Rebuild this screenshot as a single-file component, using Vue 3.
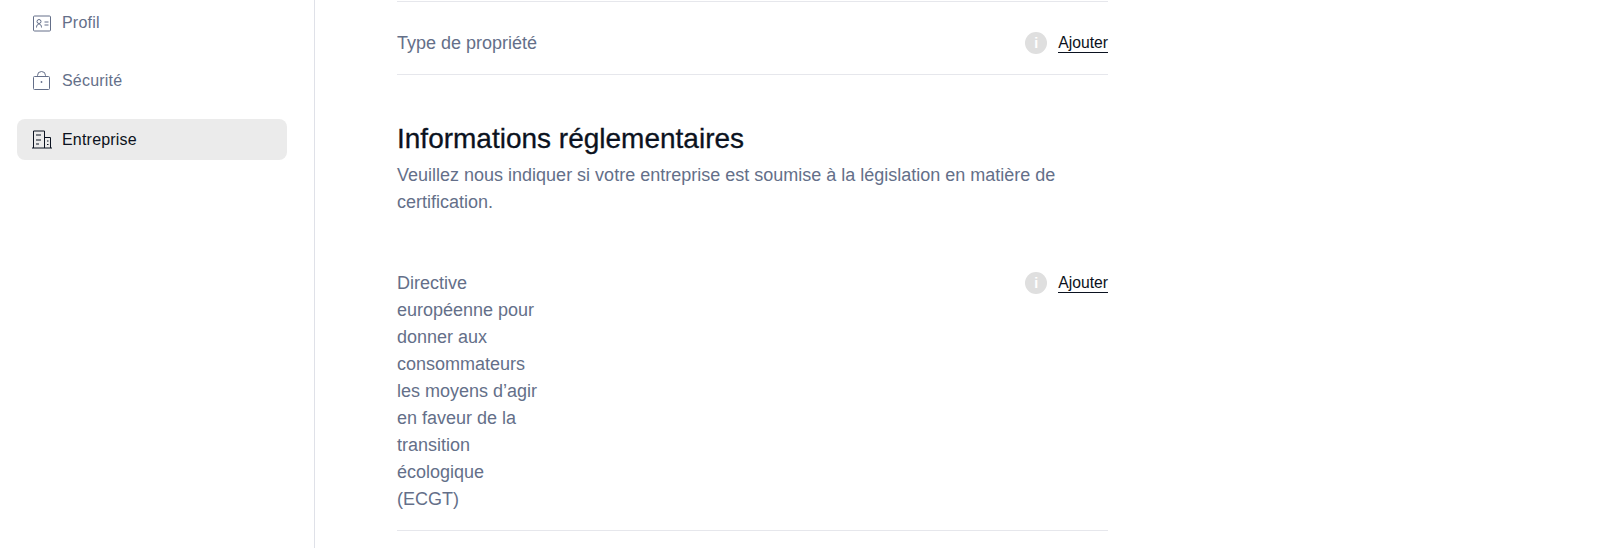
<template>
  <div class="page">
    <aside class="sidebar">
      <nav class="menu">
        <a v-for="item in menu" :key="item.label" class="item" :class="{ active: item.active }">
          <svg v-if="item.icon === 'card'" class="icon" viewBox="0 0 20 20" fill="none" stroke="currentColor" stroke-width="1">
            <rect x="1.500" y="3" width="17" height="15" rx="1" />
            <circle cx="7" cy="8.500" r="2" />
            <path d="M4.500 14.500c0-2 1-3.500 2.500-3.500s2.500 1.500 2.500 3.500M12.500 9h4M12.500 12h4" />
          </svg>
          <svg v-else-if="item.icon === 'lock'" class="icon" viewBox="0 0 20 20" fill="none" stroke="currentColor" stroke-width="1">
            <rect x="1.500" y="5.500" width="16" height="13" rx="1" />
            <path d="M5.500 5.500V4.500a4 4 0 0 1 8 0v1" />
            <circle cx="9.500" cy="11" r=".9" fill="currentColor" stroke="none" />
          </svg>
          <svg v-else class="icon" viewBox="0 0 20 20" fill="none" stroke="currentColor" stroke-width="1">
            <path d="M1.500 18V1h11v17M12.500 7.500h6v10.500M0 18h20" />
            <path d="M4 5h5M4 10h5M4 14h3M15 11h1.500M15 14.500h1.500" />
          </svg>
          <span>{{ item.label }}</span>
        </a>
      </nav>
    </aside>
    <main class="content">
      <div class="row first">
        <div class="label">Type de propriété</div>
        <div class="action">
          <span class="info">i</span>
          <a class="add">Ajouter</a>
        </div>
      </div>
      <h2>Informations réglementaires</h2>
      <p class="desc">Veuillez nous indiquer si votre entreprise est soumise à la législation en matière de certification.</p>
      <div class="row second">
        <div class="label wrap">Directive européenne pour donner aux consommateurs les moyens d’agir en faveur de la transition écologique (ECGT)</div>
        <div class="action">
          <span class="info">i</span>
          <a class="add">Ajouter</a>
        </div>
      </div>
    </main>
  </div>
</template>

<script setup>
const menu = [
  { label: 'Profil', icon: 'card' },
  { label: 'Sécurité', icon: 'lock' },
  { label: 'Entreprise', icon: 'building', active: true },
]
</script>

<style>
html, body {
  margin: 0;
  background: #fff;
}
</style>

<style scoped>
.page {
  display: flex;
  height: 548px;
  overflow: hidden;
  font-family: "Liberation Sans", Arial, sans-serif;
  font-size: 16px;
  color: #646f89;
}

.sidebar {
  flex: none;
  width: 270px;
  border-right: 1px solid #dfe1e8;
  padding: 2px 27px 0 17px;
}

.menu {
  display: flex;
  flex-direction: column;
  gap: 17.500px;
}

.item {
  display: flex;
  align-items: center;
  gap: 10px;
  height: 41px;
  padding-left: 15px;
  border-radius: 8px;
  letter-spacing: .2px;
}

.item.active {
  background: #ebebeb;
  color: #0b1220;
}

.icon {
  width: 20px;
  height: 20px;
  flex: none;
}

.content {
  width: 711px;
  margin-left: 82px;
}

.row {
  display: flex;
  justify-content: space-between;
  align-items: flex-start;
  border-bottom: 1px solid #e6e7ec;
  font-size: 18px;
}

.row.first {
  border-top: 1px solid #e6e7ec;
  margin-top: 1px;
  padding: 28px 0 17px;
}

.row.second {
  margin-top: 54px;
  padding-bottom: 17px;
}

.label {
  line-height: 27px;
}

.label.wrap {
  width: 146px;
}

.action {
  display: flex;
  align-items: center;
  gap: 11px;
  height: 27px;
  margin-top: -1px;
}

.info {
  width: 22px;
  height: 22px;
  border-radius: 50%;
  background: #dfdfdf;
  color: #fff;
  font-size: 14px;
  font-weight: 700;
  display: flex;
  align-items: center;
  justify-content: center;
}

.add {
  color: #0b1220;
  font-size: 15.700px;
  line-height: 19px;
  border-bottom: 1px solid #0b1220;
}

h2 {
  margin: 47px 0 0;
  color: #0b1220;
  font-size: 28px;
  font-weight: 400;
  line-height: 34px;
  -webkit-text-stroke: .3px #0b1220;
}

.desc {
  margin: 6px 0 0;
  line-height: 27px;
  font-size: 18px;
}
</style>
